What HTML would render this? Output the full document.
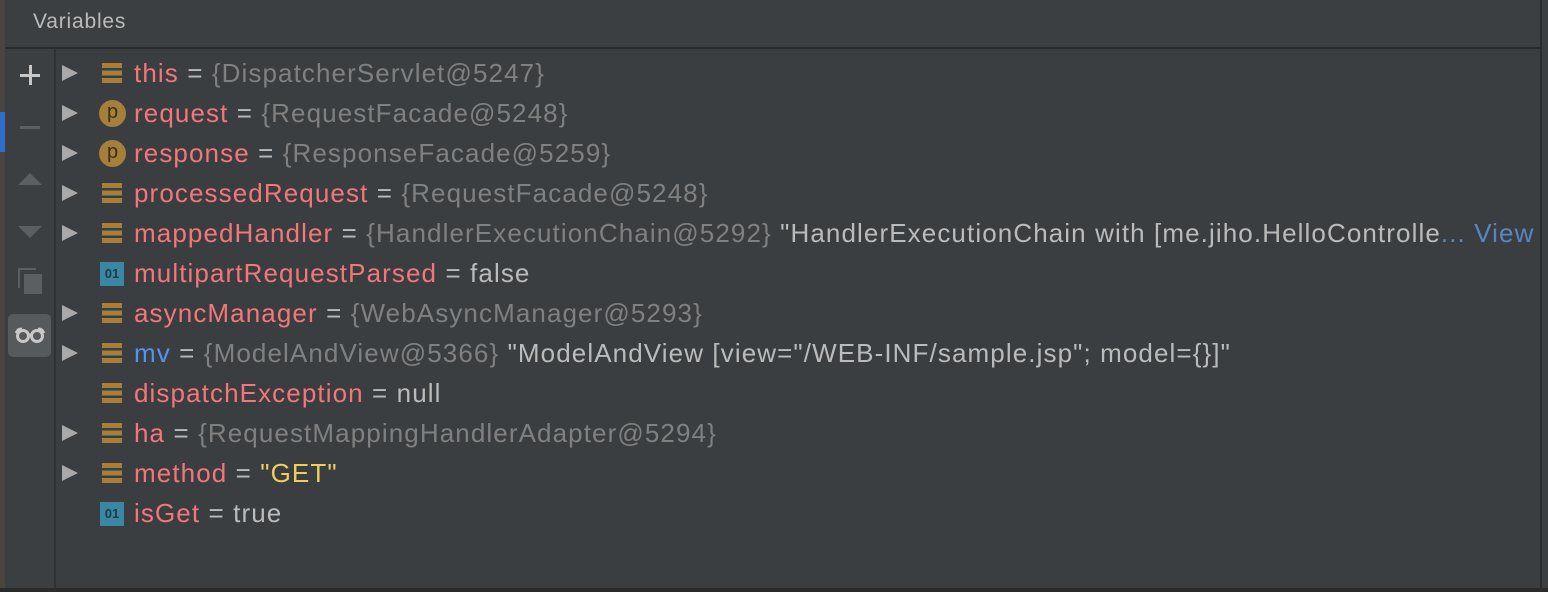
<!DOCTYPE html>
<html><head><style>
html,body{margin:0;padding:0;width:1548px;height:592px;overflow:hidden;background:#3b3e41;font-family:"Liberation Sans",sans-serif}
.strip{position:absolute;left:0;top:0;width:5px;height:592px;background:#4a463f}
.hdr{position:absolute;left:5px;top:0;width:1535px;height:47px;background:#3c3f41;border-bottom:2px solid #2b2b2b}
.hdr span{position:absolute;left:28px;top:10px;color:#bbbbbb;font-size:21px;letter-spacing:0.8px}
.tb{position:absolute;left:5px;top:49px;width:49px;height:543px;background:#3c3f41;border-right:2px solid #2f3133}
.rb{position:absolute;left:1540px;top:0;width:8px;height:592px;background:#3c3f41;border-left:2px solid #2b2b2b}
.bot{position:absolute;left:0;top:588px;width:1548px;height:4px;background:#2b2b2b}
.row{position:absolute;left:62px;height:40px;font-size:26px;letter-spacing:1.1px;line-height:40px;white-space:nowrap;color:#bbbbbb}
.arr{position:absolute;left:0;top:12px;width:0;height:0;border-left:16px solid #a9a9a9;border-top:8px solid transparent;border-bottom:8px solid transparent}
.ic{position:absolute;left:40px;top:10px;width:20px;height:20px;letter-spacing:0}
.fld{background:linear-gradient(#a6803a 0 5px,transparent 5px 7.5px,#a6803a 7.5px 12.5px,transparent 12.5px 15px,#a6803a 15px 20px)}
.p{left:37px;top:7px;width:27px;height:27px;border-radius:50%;background:#a6803a;color:#3a2f1a;font-size:20px;line-height:24px;text-align:center}
.b{left:38px;top:9px;width:24px;height:24px;background:#3a87a4;color:#1f3a47;font-size:13px;line-height:24px;text-align:center;font-weight:bold}
.t{position:absolute;left:72px;top:0}
.n{color:#f2777a}.g{color:#808080}.y{color:#f2cc5a}.bl{color:#5394ec}.v{color:#5a86c0}
</style></head><body>
<div class="strip"><div style="position:absolute;top:112px;width:5px;height:40px;background:#2f6fd0"></div></div>
<div class="hdr"><span>Variables</span></div>
<div class="tb">
<div style="position:absolute;left:15px;top:25px;width:20px;height:3px;background:#c8c8c8"></div>
<div style="position:absolute;left:23.5px;top:16px;width:3px;height:20px;background:#c8c8c8"></div>
<div style="position:absolute;left:15px;top:77px;width:20px;height:3px;background:#5c5f62"></div>
<div style="position:absolute;left:13px;top:124px;width:0;height:0;border-bottom:12px solid #5c5f62;border-left:12px solid transparent;border-right:12px solid transparent"></div>
<div style="position:absolute;left:13px;top:177px;width:0;height:0;border-top:12px solid #5c5f62;border-left:12px solid transparent;border-right:12px solid transparent"></div>
<div style="position:absolute;left:13px;top:219px;width:16px;height:18px;border:2px solid #5c5f62;border-right:none;border-bottom:none"></div>
<div style="position:absolute;left:19px;top:225px;width:18px;height:20px;background:#5c5f62"></div>
<div style="position:absolute;left:3px;top:265px;width:43px;height:43px;border-radius:5px;background:#575a5d"></div>
<svg style="position:absolute;left:10px;top:276px" width="30" height="20"><circle cx="8" cy="11" r="5.5" fill="none" stroke="#c8c8c8" stroke-width="3"/><circle cx="22" cy="11" r="5.5" fill="none" stroke="#c8c8c8" stroke-width="3"/><path d="M1 8 Q3 3 7 4 M29 8 Q27 3 23 4 M13 10 L17 10" stroke="#c8c8c8" stroke-width="2.5" fill="none"/></svg>
</div>
<div class="rb"></div>
<div class="bot"></div>

<div class="row" style="top:53px"><div class="arr"></div><div class="ic fld"></div><div class="t"><span class="n">this</span> = <span class="g">{DispatcherServlet@5247}</span></div></div>
<div class="row" style="top:93px"><div class="arr"></div><div class="ic p">p</div><div class="t"><span class="n">request</span> = <span class="g">{RequestFacade@5248}</span></div></div>
<div class="row" style="top:133px"><div class="arr"></div><div class="ic p">p</div><div class="t"><span class="n">response</span> = <span class="g">{ResponseFacade@5259}</span></div></div>
<div class="row" style="top:173px"><div class="arr"></div><div class="ic fld"></div><div class="t"><span class="n">processedRequest</span> = <span class="g">{RequestFacade@5248}</span></div></div>
<div class="row" style="top:213px"><div class="arr"></div><div class="ic fld"></div><div class="t"><span class="n">mappedHandler</span> = <span class="g">{HandlerExecutionChain@5292}</span> "HandlerExecutionChain with [me.jiho.HelloControlle<span class="v">... View</span></div></div>
<div class="row" style="top:253px"><div class="ic b">01</div><div class="t"><span class="n">multipartRequestParsed</span> = false</div></div>
<div class="row" style="top:293px"><div class="arr"></div><div class="ic fld"></div><div class="t"><span class="n">asyncManager</span> = <span class="g">{WebAsyncManager@5293}</span></div></div>
<div class="row" style="top:333px"><div class="arr"></div><div class="ic fld"></div><div class="t"><span class="bl">mv</span> = <span class="g">{ModelAndView@5366}</span> "ModelAndView [view="/WEB-INF/sample.jsp"; model={}]"</div></div>
<div class="row" style="top:373px"><div class="ic fld"></div><div class="t"><span class="n">dispatchException</span> = null</div></div>
<div class="row" style="top:413px"><div class="arr"></div><div class="ic fld"></div><div class="t"><span class="n">ha</span> = <span class="g">{RequestMappingHandlerAdapter@5294}</span></div></div>
<div class="row" style="top:453px"><div class="arr"></div><div class="ic fld"></div><div class="t"><span class="n">method</span> = <span class="y">"GET"</span></div></div>
<div class="row" style="top:493px"><div class="ic b">01</div><div class="t"><span class="n">isGet</span> = true</div></div>
</body></html>
